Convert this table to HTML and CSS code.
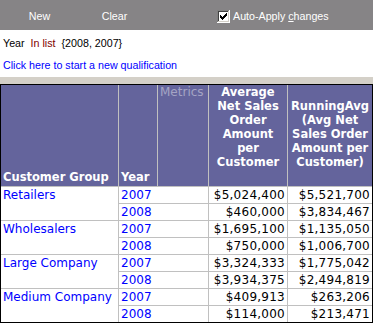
FILE: index.html
```html
<!DOCTYPE html>
<html>
<head>
<meta charset="utf-8">
<link rel="stylesheet" href="styles.css">
</head>
<body>
<div class="toolbar">
  <span class="tb-btn">New</span>
  <span class="tb-btn">Clear</span>
  <label class="auto">
    <svg class="chk" width="13" height="13" viewBox="0 0 13 13" shape-rendering="crispEdges">
      <rect x="0" y="0" width="13" height="13" fill="#ffffff"/>
      <rect x="0" y="0" width="12" height="1" fill="#808080"/>
      <rect x="0" y="0" width="1" height="12" fill="#808080"/>
      <rect x="1" y="1" width="10" height="1" fill="#404040"/>
      <rect x="1" y="1" width="1" height="10" fill="#404040"/>
      <rect x="1" y="11" width="11" height="1" fill="#d4d0c8"/>
      <rect x="11" y="1" width="1" height="11" fill="#d4d0c8"/>
      <rect x="3" y="5" width="1" height="3" fill="#000"/>
      <rect x="4" y="6" width="1" height="3" fill="#000"/>
      <rect x="5" y="7" width="1" height="3" fill="#000"/>
      <rect x="6" y="6" width="1" height="3" fill="#000"/>
      <rect x="7" y="5" width="1" height="3" fill="#000"/>
      <rect x="8" y="4" width="1" height="3" fill="#000"/>
      <rect x="9" y="3" width="1" height="3" fill="#000"/>
    </svg>
    <span class="auto-label">Auto-Apply <u>c</u>hanges</span>
  </label>
</div>
<div class="filter">
  <div class="fline"><span>Year</span><span class="op">In list</span><span class="vals">{2008, 2007}</span></div>
  <div class="fline"><a class="newq">Click here to start a new qualification</a></div>
</div>
<div class="band"></div>
<div class="grid-wrap">
  <div class="grid">
    <div class="hd hd-attr">Customer Group</div>
    <div class="hd hd-attr">Year</div>
    <div class="hd hd-metrics">Metrics</div>
    <div class="hd hd-metric">Average<br>Net Sales<br>Order<br>Amount<br>per<br>Customer</div>
    <div class="hd hd-metric">RunningAvg<br>(Avg Net<br>Sales Order<br>Amount per<br>Customer)</div>

    <div class="cell cust">Retailers</div>
    <div class="cell yr">2007</div>
    <div class="cell num">$5,024,400</div>
    <div class="cell num">$5,521,700</div>
    <div class="cell yr">2008</div>
    <div class="cell num">$460,000</div>
    <div class="cell num">$3,834,467</div>

    <div class="cell cust">Wholesalers</div>
    <div class="cell yr">2007</div>
    <div class="cell num">$1,695,100</div>
    <div class="cell num">$1,135,050</div>
    <div class="cell yr">2008</div>
    <div class="cell num">$750,000</div>
    <div class="cell num">$1,006,700</div>

    <div class="cell cust">Large Company</div>
    <div class="cell yr">2007</div>
    <div class="cell num">$3,324,333</div>
    <div class="cell num">$1,775,042</div>
    <div class="cell yr">2008</div>
    <div class="cell num">$3,934,375</div>
    <div class="cell num">$2,494,819</div>

    <div class="cell cust">Medium Company</div>
    <div class="cell yr">2007</div>
    <div class="cell num">$409,913</div>
    <div class="cell num">$263,206</div>
    <div class="cell yr">2008</div>
    <div class="cell num">$114,000</div>
    <div class="cell num">$213,471</div>
  </div>
</div>
</body>
</html>
```
FILE: styles.css
```css
html, body {
  margin: 0;
  padding: 0;
  background: #ffffff;
}
body {
  width: 373px;
  height: 323px;
  overflow: hidden;
  font-family: "Liberation Sans", Arial, sans-serif;
  font-size: 10.7px;
}
.toolbar {
  height: 30px;
  box-sizing: border-box;
  background: #868486;
  color: #ffffff;
  padding: 10px 0 0 2px;
  display: flex;
  align-items: flex-start;
  line-height: 12px;
}
.tb-btn {
  width: 75px;
  text-align: center;
}
.auto {
  margin-left: 65px;
  display: flex;
  align-items: flex-start;
}
.chk {
  display: block;
  flex: none;
}
.auto-label {
  margin-left: 3px;
}
.filter {
  padding: 2px 0 1px 3px;
}
.fline {
  line-height: 22px;
  height: 22px;
  white-space: nowrap;
  color: #000000;
}
.op {
  color: #800000;
  margin-left: 6px;
}
.vals {
  margin-left: 6px;
}
.newq {
  color: #0000ff;
  text-decoration: none;
}
.band {
  height: 7px;
  background: #d4d0c8;
}
.grid-wrap {
  border: 1px solid #000000;
  background: #c0c0c0;
}
.grid {
  display: grid;
  grid-template-columns: 117px 38px 50px 78px 84px;
  grid-template-rows: 101px repeat(8, 16px);
  gap: 1px;
  font-family: "DejaVu Sans", Verdana, sans-serif;
}
.hd {
  background: #64649c;
  color: #ffffff;
  font-weight: bold;
  font-size: 11.5px;
  line-height: 14px;
  box-sizing: border-box;
  white-space: nowrap;
}
.hd-attr {
  display: flex;
  align-items: flex-end;
  padding: 0 2px 2px 2px;
}
.hd-metrics {
  color: #a4a4c4;
  font-weight: normal;
  font-size: 12px;
  padding: 0 2px;
}
.hd-metric {
  display: flex;
  align-items: flex-end;
  justify-content: center;
  text-align: center;
  padding: 0 2px 17px 2px;
}
.cell {
  background: #ffffff;
  font-size: 12px;
  line-height: 15px;
  padding: 1px 2px 0 2px;
  white-space: nowrap;
}
.cust {
  grid-row: span 2;
  color: #0000ff;
}
.yr {
  grid-column: span 2;
  color: #0000ff;
}
.num {
  color: #000000;
  text-align: right;
  letter-spacing: 0.25px;
}
```
